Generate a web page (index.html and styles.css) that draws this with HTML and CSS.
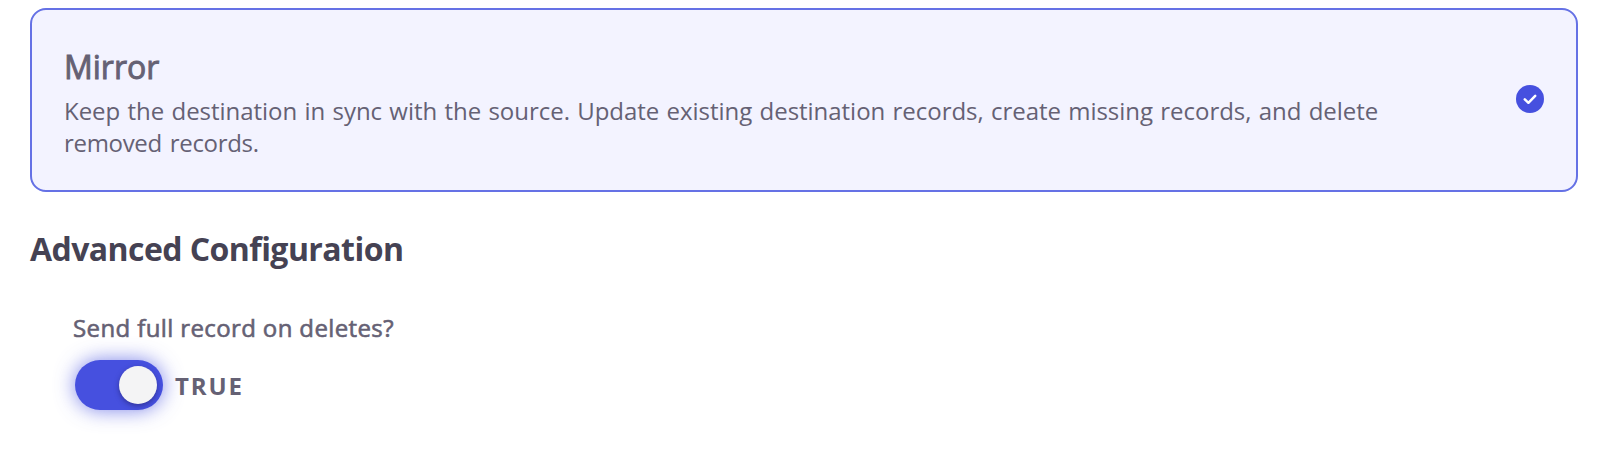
FILE: index.html
```html
<!DOCTYPE html>
<html lang="en">
<head>
<meta charset="utf-8">
<title>Sync configuration</title>
<link rel="stylesheet" href="styles.css">
</head>
<body>
<main class="page">
  <section class="option-card">
    <div class="option-text">
      <h2 class="option-title">Mirror</h2>
      <p class="option-description"><span class="line-one">Keep the destination in sync with the source. Update existing destination records, create missing records, and delete</span> <span class="line-two">removed records.</span></p>
    </div>
    <svg class="option-check" viewBox="0 0 28 28" aria-hidden="true">
      <circle cx="14" cy="14" r="14"/>
      <path d="M8.8 14.4L12.4 17.8L19.2 10.8"/>
    </svg>
  </section>
  <h1 class="section-title">Advanced Configuration</h1>
  <section class="setting">
    <label class="setting-label" for="send-full">Send full record on deletes?</label>
    <div class="setting-control">
      <button class="toggle" id="send-full" role="switch" aria-checked="true"><span class="toggle-knob"></span></button>
      <span class="toggle-value">TRUE</span>
    </div>
  </section>
</main>
</body>
</html>
```
FILE: styles.css
```css
* { box-sizing: border-box; }

body {
  margin: 0;
  background: #fff;
  color: #656174;
  font-family: "Open Sans", "Noto Sans", sans-serif;
}

h1, h2, p { margin: 0; }

.page {
  height: 450px;
  padding: 8px 28px 0 30px;
  overflow: hidden;
}

.option-card {
  display: flex;
  justify-content: space-between;
  width: 1548px;
  height: 184px;
  padding: 37px 32px 0 32px;
  border: 2px solid #6571e5;
  border-radius: 16px;
  background: #f3f3ff;
}

.option-title {
  font-size: 32px;
  font-weight: 400;
  line-height: 40px;
  letter-spacing: 0;
  -webkit-text-stroke: 0.9px currentColor;
}

.option-description {
  margin-top: 8px;
  font-size: 24px;
  line-height: 32px;
  white-space: nowrap;
}

.line-one, .line-two { display: block; }

.line-one { letter-spacing: -0.03px; word-spacing: 1.1px; }

.line-two { letter-spacing: -0.32px; word-spacing: 2px; }

.option-check {
  flex: none;
  width: 28px;
  height: 28px;
  margin-top: 38.3px;
}

.option-check circle { fill: #4650df; }

.option-check path {
  fill: none;
  stroke: #fff;
  stroke-width: 2.5;
  stroke-linecap: round;
  stroke-linejoin: round;
}

.section-title {
  margin-top: 37px;
  color: #454253;
  font-size: 32px;
  font-weight: 700;
  line-height: 40px;
  letter-spacing: -0.56px;
}

.setting { padding: 43px 0 0 43px; }

.setting-label {
  display: block;
  font-size: 24px;
  font-weight: 400;
  line-height: 32px;
  letter-spacing: 0.38px;
  -webkit-text-stroke: 0.6px currentColor;
}

.setting-control {
  display: flex;
  align-items: center;
  margin: 16px 0 0 2px;
}

.toggle {
  display: flex;
  align-items: center;
  justify-content: flex-end;
  width: 88px;
  height: 50px;
  padding: 0 6.5px;
  border: 0;
  border-radius: 25px;
  background: #4650df;
  box-shadow: 0 0 20px rgba(70, 80, 223, 0.7);
}

.toggle-knob {
  width: 38px;
  height: 38px;
  border-radius: 50%;
  background: #f4f4f5;
  box-shadow: 0 2px 5px rgba(30, 25, 90, 0.5);
}

.toggle-value {
  margin: 2px 0 0 12px;
  font-size: 24px;
  font-weight: 700;
  line-height: 32px;
  letter-spacing: 1.9px;
}
```
